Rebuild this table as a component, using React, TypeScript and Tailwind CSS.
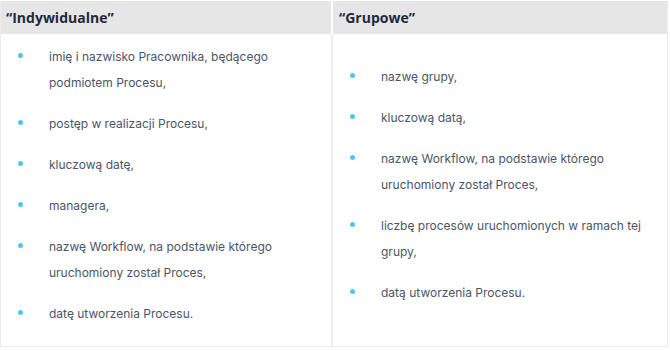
const individual = [
  ["imię i nazwisko Pracownika, będącego", "podmiotem Procesu,"],
  ["postęp w realizacji Procesu,"],
  ["kluczową datę,"],
  ["managera,"],
  ["nazwę Workflow, na podstawie którego", "uruchomiony został Proces,"],
  ["datę utworzenia Procesu."],
];

const group = [
  ["nazwę grupy,"],
  ["kluczową datą,"],
  ["nazwę Workflow, na podstawie którego", "uruchomiony został Proces,"],
  ["liczbę procesów uruchomionych w ramach tej", "grupy,"],
  ["datą utworzenia Procesu."],
];

function BulletList({ items }: { items: string[][] }) {
  return (
    <ul className="flex flex-col gap-[15px] w-full">
      {items.map((lines, i) => (
        <li key={i} className="flex">
          <span className="w-[48px] shrink-0 pl-[17px] pt-[9px]">
            <span className="block w-[5px] h-[5px] rounded-full bg-[#4cc8f0]" />
          </span>
          <span className="font-['Inter',sans-serif] text-[12px] leading-[26px] text-[#4a5568]">
            {lines.map((l, j) => (
              <span key={j} className="block whitespace-nowrap">
                {l}
              </span>
            ))}
          </span>
        </li>
      ))}
    </ul>
  );
}

export default function App() {
  return (
    <div
      className="w-[670px] h-[350px] bg-white pt-[1px]"
      style={{ fontFamily: '"Open Sans", "Liberation Sans", sans-serif' }}
    >
      <div className="w-[668px] border border-t-0 border-[#ececec]">
        <div className="grid grid-cols-[332px_1fr] bg-[#e6e6e6] h-[33px] items-center">
          <div className="px-[5px] font-bold text-[14px] text-[#1f2a3c] border-r-2 border-white h-full flex items-center">
            “Indywidualne”
          </div>
          <div className="px-[6px] font-bold text-[14px] text-[#1f2a3c] h-full flex items-center">
            “Grupowe”
          </div>
        </div>
        <div className="grid grid-cols-[332px_1fr] h-[312px]">
          <div className="flex items-center border-r-2 border-[#eeeeee] pb-[10px]">
            <BulletList items={individual} />
          </div>
          <div className="flex items-center pb-[10px]">
            <BulletList items={group} />
          </div>
        </div>
      </div>
    </div>
  );
}
